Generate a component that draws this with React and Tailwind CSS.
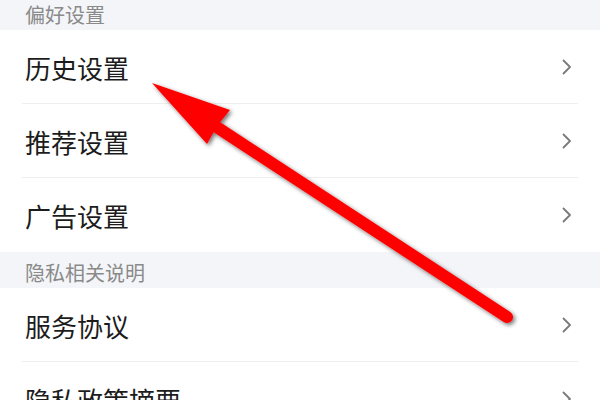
import React from "react";

const font = { fontFamily: '"Noto Sans CJK SC", "Noto Sans", sans-serif' };

function Chevron() {
  return (
    <svg width="10" height="16" viewBox="0 0 10 16" className="shrink-0">
      <path d="M1.5 1.5 L8 8 L1.5 14.5" fill="none" stroke="#7a7a7a" strokeWidth="1.8" strokeLinecap="round" strokeLinejoin="round" />
    </svg>
  );
}

function Header({ text }) {
  return (
    <div className="h-[36px] shrink-0 bg-[#f4f5f8] flex items-center pl-[25px] pt-[5px]">
      <span className="text-[20px] leading-none text-[#8a8a8a]">{text}</span>
    </div>
  );
}

function Row({ text, divider = true }) {
  return (
    <div className="h-[74px] shrink-0 bg-white px-[22px] flex flex-col">
      <div className={"flex-1 flex items-center justify-between pl-[3px] pr-[6px] " + (divider ? "border-b border-[#efefef]" : "")}>
        <span className="text-[26px] leading-none text-[#1c1c1c] pt-[2px]">{text}</span>
        <Chevron />
      </div>
    </div>
  );
}

export default function App() {
  return (
    <div className="relative w-[600px] h-[400px] overflow-hidden bg-white" style={font}>
      <div className="flex flex-col mt-[-6px]">
        <Header text="偏好设置" />
        <Row text="历史设置" />
        <Row text="推荐设置" />
        <Row text="广告设置" divider={false} />
        <Header text="隐私相关说明" />
        <Row text="服务协议" />
        <Row text="隐私政策摘要" />
      </div>
      <svg className="absolute inset-0 pointer-events-none" width="600" height="400" viewBox="0 0 600 400">
        <defs>
          <filter id="sh" x="-20%" y="-20%" width="140%" height="140%">
            <feDropShadow dx="2" dy="2" stdDeviation="2" floodColor="#000" floodOpacity="0.55" />
          </filter>
        </defs>
        <g filter="url(#sh)">
          <line x1="212" y1="124" x2="507" y2="317" stroke="#ff0000" strokeWidth="12" strokeLinecap="round" />
          <polygon points="152,83 230,110 217,126 207,144" fill="#ff0000" />
        </g>
      </svg>
    </div>
  );
}
